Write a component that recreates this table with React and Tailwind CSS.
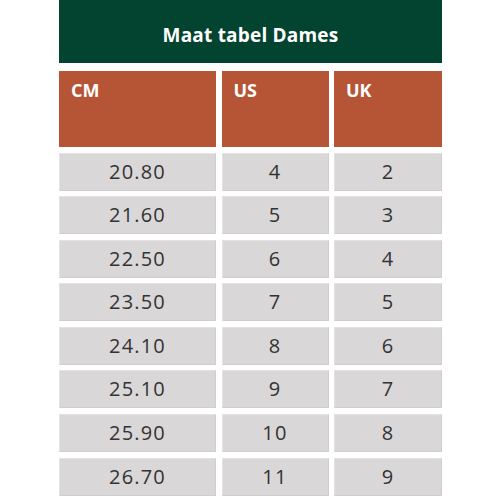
import React from 'react';

const rows = [
  ['20.80', '4', '2'],
  ['21.60', '5', '3'],
  ['22.50', '6', '4'],
  ['23.50', '7', '5'],
  ['24.10', '8', '6'],
  ['25.10', '9', '7'],
  ['25.90', '10', '8'],
  ['26.70', '11', '9'],
];

export default function App() {
  return (
    <div className="w-[500px] h-[500px] overflow-hidden bg-white" style={{ fontFamily: '"Open Sans", "Liberation Sans", sans-serif' }}>
      <div className="ml-[59px] w-[383px]">
        {/* Title bar */}
        <div className="h-[63px] bg-[#034430] flex items-center justify-center pt-[7px]">
          <h1 className="text-white text-[19px] font-bold tracking-[0.2px]">Maat tabel Dames</h1>
        </div>

        {/* Column headers */}
        <div className="mt-[8px] grid grid-cols-[157px_107px_108px] gap-x-[5.5px]">
          {['CM', 'US', 'UK'].map((h) => (
            <div key={h} className="h-[76px] bg-[#b55535] px-[12px] pt-[6px]">
              <span className="text-white text-[18px] font-bold">{h}</span>
            </div>
          ))}
        </div>

        {/* Size rows */}
        <div className="mt-[5.5px] grid grid-cols-[157px_107px_108px] gap-x-[5.5px] gap-y-[5.6px]">
          {rows.map((r) =>
            r.map((v, i) => (
              <div
                key={r[0] + i}
                className="h-[38px] bg-[#d9d7d8] border border-[#cfcdce] border-t-[#e4e2e3] border-l-[#e4e2e3] flex items-center justify-center text-[20px] tracking-[1.2px] text-[#333333]"
              >
                {v}
              </div>
            ))
          )}
          {/* next row, only its top edge shows */}
          <div className="h-[38px] bg-[#d9d7d8] border border-[#cfcdce] border-t-[#e4e2e3]" />
          <div className="h-[38px] bg-[#d9d7d8] border border-[#cfcdce] border-t-[#e4e2e3]" />
          <div className="h-[38px] bg-[#d9d7d8] border border-[#cfcdce] border-t-[#e4e2e3]" />
        </div>
      </div>
    </div>
  );
}
